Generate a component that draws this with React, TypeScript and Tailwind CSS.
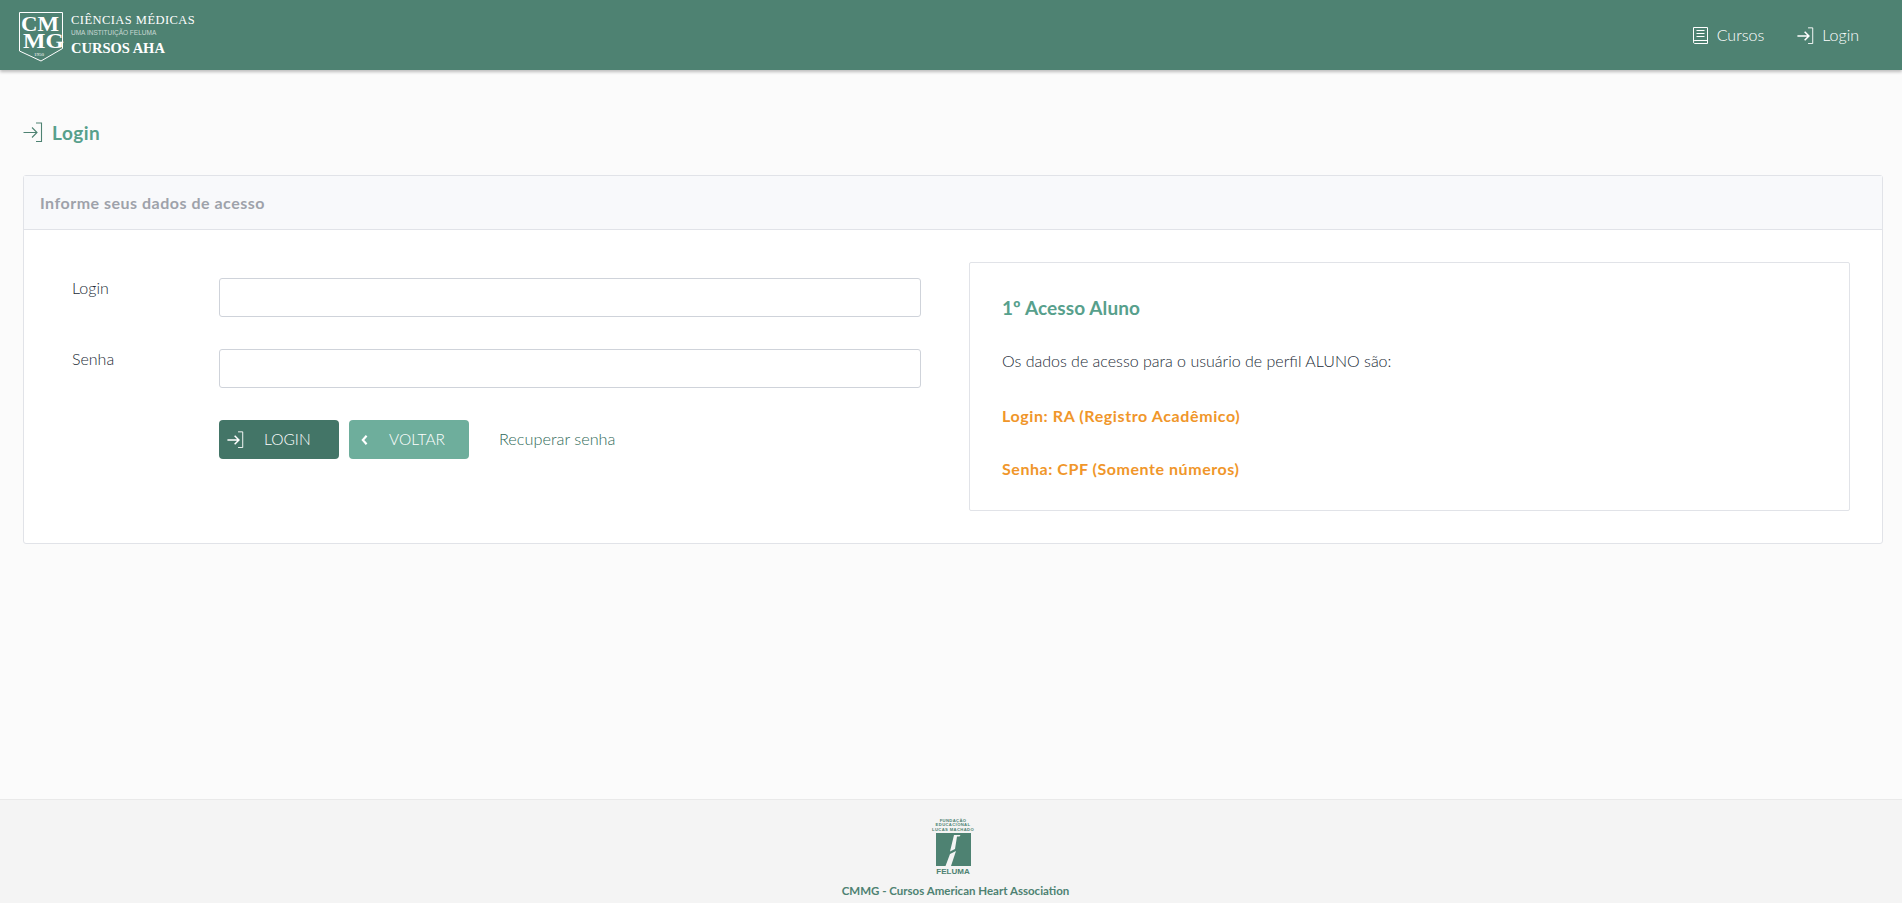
import React from "react";

function LoginIcon({ className, thin }: { className?: string; thin?: boolean }) {
  return (
    <svg viewBox="0 0 20 20" fill="none" stroke="currentColor" className={className}>
      <path d="M0.5 10.5h13M9 5.5l5 5-5 5" strokeWidth={thin ? 1.1 : 1.8} />
      <path d="M13 1h5.5v18.5H13" strokeWidth="1.1" />
    </svg>
  );
}

function BookIcon({ className }: { className?: string }) {
  return (
    <svg viewBox="0 0 15 17" fill="none" stroke="currentColor" strokeWidth="1" className={className}>
      <path d="M0.5 14.5V0.5h14v16H2a1.5 1.5 0 0 1-1.5-2zM0.5 14.5A1.5 1.5 0 0 1 2 13.5h12.5" />
      <path d="M3.5 3.5h8M3.5 6.5h8M3.5 9.5h8" />
    </svg>
  );
}

function Shield() {
  return (
    <svg viewBox="0 0 45 50" className="w-[45px] h-[50px] mt-[3px]" fill="none">
      <path d="M0.5 0.5h43v36L22 49 0.5 39z" stroke="#fff" strokeWidth="1" />
      <text x="2" y="19" fill="#fff" fontFamily="'Liberation Serif', serif" fontWeight="700" fontSize="22" textLength="38" lengthAdjust="spacingAndGlyphs">CM</text>
      <text x="4" y="36" fill="#fff" fontFamily="'Liberation Serif', serif" fontWeight="700" fontSize="22" textLength="41" lengthAdjust="spacingAndGlyphs">MG</text>
      <text x="20" y="44" textAnchor="middle" fill="#fff" fontFamily="'Liberation Serif', serif" fontSize="5">1950</text>
    </svg>
  );
}

function FelumaLogo() {
  return (
    <div className="flex flex-col items-center w-[35px] mr-[5px]">
      <div className="text-[4.2px] leading-[4.4px] font-bold text-[#4e8272] text-center tracking-[0.35px] whitespace-nowrap font-['Liberation_Sans',sans-serif]">
        <div>FUNDAÇÃO</div>
        <div>EDUCACIONAL</div>
        <div>LUCAS MACHADO</div>
      </div>
      <svg viewBox="0 0 35 33" className="w-[35px] h-[33px] mt-[1px]">
        <rect width="35" height="33" fill="#4e8272" />
        <path d="M18 2h6.5l-1 1.5-2.5 0-2 12.5-5 2.5z M14 21l6-3-5 15H9.5z" fill="#f4f4f4" />
      </svg>
      <div className="mt-[2px] text-[8px] leading-[8px] font-bold text-[#4e8272] font-['Liberation_Sans',sans-serif]">FELUMA</div>
    </div>
  );
}

export default function App() {
  return (
    <div className="h-[903px] overflow-hidden flex flex-col bg-[#fbfbfb] font-['Lato',sans-serif] text-[#222b36]">
      <header className="h-[70px] shrink-0 bg-[#4e8272] shadow-[0_2px_3px_rgba(0,0,0,0.25)] flex items-center justify-between pl-[19px] pr-[43px] relative">
        <div className="flex items-center gap-[7px]">
          <Shield />
          <div className="text-white font-['Liberation_Serif',serif] mt-[2px]">
            <div className="text-[12.5px] leading-[14px] tracking-[0.45px]">CIÊNCIAS MÉDICAS</div>
            <div className="text-[6.5px] leading-[11px] font-['Liberation_Sans',sans-serif] text-white/70">UMA INSTITUIÇÃO FELUMA</div>
            <div className="text-[14.5px] leading-[21px] font-bold">CURSOS AHA</div>
          </div>
        </div>
        <nav className="flex items-center gap-[33px] text-white text-[16px] font-light">
          <a className="flex items-center gap-[9px]">
            <BookIcon className="w-[15px] h-[17px]" />
            Cursos
          </a>
          <a className="flex items-center gap-[8px]">
            <LoginIcon className="w-[17px] h-[17px]" />
            Login
          </a>
        </nav>
      </header>

      <main className="flex-1 pl-[23px] pr-[19px] pt-[49px]">
        <h1 className="flex items-center gap-[9px] h-[28px] text-[19px] font-bold tracking-[0.5px] text-[#57a08c]">
          <LoginIcon thin className="w-[20px] h-[20px] text-[#4e8272] mt-[-3px]" />
          Login
        </h1>
        <section className="mt-[28px] border border-[#e1e3e8] rounded-[3px] bg-white">
          <div className="h-[54px] bg-[#f8f9fb] border-b border-[#e1e3e8] flex items-center px-[16px] text-[16px] font-bold text-[#9ea2aa] tracking-[0.5px]">
            Informe seus dados de acesso
          </div>
          <div className="flex gap-[24px] pl-[48px] pr-[32px] py-[32px]">
            <form className="w-[873px] shrink-0 pt-[16px]">
              <div className="flex">
                <label className="w-[147px] text-[16px] font-light leading-[22px] mt-[-1px]">Login</label>
                <input className="w-[702px] h-[39px] border border-[#cfd3da] rounded-[3px] bg-white" />
              </div>
              <div className="flex mt-[32px]">
                <label className="w-[147px] text-[16px] font-light leading-[22px] mt-[-1px]">Senha</label>
                <input type="password" className="w-[702px] h-[39px] border border-[#cfd3da] rounded-[3px] bg-white" />
              </div>
              <div className="flex items-center mt-[32px] ml-[147px]">
                <button type="button" className="relative w-[120px] h-[39px] rounded-[4px] bg-[#437567] text-white text-[15.5px] font-light flex items-center pl-[45px]">
                  <LoginIcon className="absolute left-[8px] top-[11px] w-[17px] h-[17px]" />
                  LOGIN
                </button>
                <button type="button" className="relative w-[120px] h-[39px] ml-[10px] rounded-[4px] bg-[#6eae9c] text-white text-[15.5px] font-light flex items-center pl-[40px]">
                  <svg viewBox="0 0 8 12" className="absolute left-[12px] top-[15px] w-[7px] h-[10px]" fill="none" stroke="currentColor" strokeWidth="2.6">
                    <path d="M6.5 1L2 6l4.5 5" />
                  </svg>
                  VOLTAR
                </button>
                <a className="ml-[30px] text-[16.3px] font-light text-[#2f6a59]">Recuperar senha</a>
              </div>
            </form>
            <aside className="flex-1 h-[249px] border border-[#e1e3e8] rounded-[2px] px-[32px] pt-[32px]">
              <h2 className="text-[19px] leading-[26px] font-bold tracking-[0.1px] text-[#57a08c]">1º Acesso Aluno</h2>
              <p className="mt-[28px] text-[16px] leading-[24px] font-light">Os dados de acesso para o usuário de perfil ALUNO são:</p>
              <p className="mt-[31px] text-[16px] leading-[24px] font-bold tracking-[0.6px] text-[#f0962a]">Login: RA (Registro Acadêmico)</p>
              <p className="mt-[29px] text-[16px] leading-[24px] font-bold tracking-[0.55px] text-[#f0962a]">Senha: CPF (Somente números)</p>
            </aside>
          </div>
        </section>
      </main>

      <footer className="h-[104px] shrink-0 bg-[#f4f4f4] border-t border-[#e9e9e9] flex flex-col items-center pt-[19px] pl-[9px]">
        <FelumaLogo />
        <div className="mt-[8px] text-[11.5px] leading-[14px] font-bold text-[#4e8272]">CMMG - Cursos American Heart Association</div>
      </footer>
    </div>
  );
}
